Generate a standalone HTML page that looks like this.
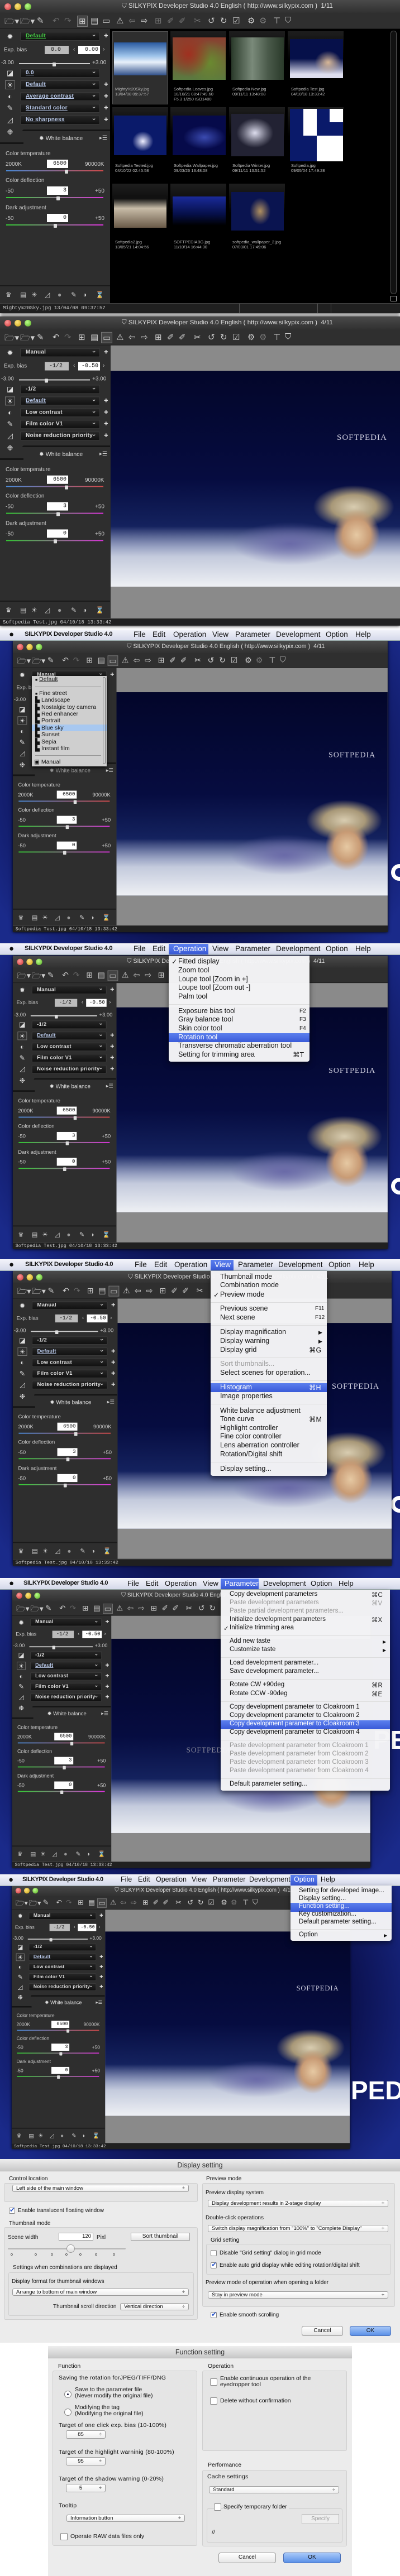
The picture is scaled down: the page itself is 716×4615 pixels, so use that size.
<!DOCTYPE html>
<html><head><meta charset="utf-8">
<style>
*{margin:0;padding:0;box-sizing:border-box}
body{width:716px;height:4615px;position:relative;background:#fff;font-family:"Liberation Sans","DejaVu Sans",sans-serif;overflow:hidden}
.a{position:absolute}
.t{position:absolute;white-space:nowrap}
.desk{position:absolute;left:0;width:716px;background:radial-gradient(ellipse 60% 80% at 50% 45%,#050832 0%,#0a0f4a 60%,#1a2a8a 100%)}
.mb{position:absolute;left:0;width:716px;height:20px;background:linear-gradient(#f2f3fa,#d5d9ea);border-bottom:1px solid #9aa;color:#111;font-size:13.5px}
.mb span{position:absolute;top:1px;white-space:nowrap}
.mb .ap{font-size:15px;top:0}
.mb b{position:absolute;top:2px;white-space:nowrap;font-size:.85em;letter-spacing:-.4px}
.hl{background:linear-gradient(#5b7fee,#3a5ad8);color:#fff;}
.win{position:absolute;width:716px;height:556px;background:#2c2c2c;transform-origin:0 0;overflow:hidden;box-shadow:0 0 6px #000}
.tt{position:absolute;left:0;top:0;width:716px;height:24px;background:linear-gradient(#4a4a4a,#303030)}
.tt i{position:absolute;top:6px;width:12px;height:12px;border-radius:50%}
.tt .r{left:8px;background:radial-gradient(circle at 40% 35%,#f99,#c33)}
.tt .y{left:26px;background:radial-gradient(circle at 40% 35%,#ffe680,#c9a010)}
.tt .g{left:44px;background:radial-gradient(circle at 40% 35%,#bf8,#5a2)}
.ttl{position:absolute;left:218px;top:5px;font-size:11.5px;color:#ddd;white-space:nowrap}
.tool{position:absolute;left:0;top:24px;width:716px;height:28px;background:#2f2f2f;border-bottom:1px solid #1a1a1a;color:#ccc;font-size:15px}
.tool span{position:absolute;top:4px}
.pan{position:absolute;left:0;top:52px;width:197px;height:491px;background:#2e2e2e;color:#ccc;font-size:10px}
.pan .t{font-size:10px;color:#ccc}
.sel{position:absolute;left:36px;width:143px;height:16px;background:linear-gradient(#262626,#111);border:1px solid #3a3a3a;border-radius:2px;color:#ddd;font-size:10px;font-weight:bold;line-height:14px;padding-left:9px;white-space:nowrap;letter-spacing:.3px}
.sel:after{content:"⌄";position:absolute;right:5px;top:-3px;color:#ccc;font-size:11px}
.sel u{color:#b8c8e8}
.pl{position:absolute;left:186px;font-size:9px;color:#ddd}
.ic{position:absolute;left:9px;width:18px;height:16px;color:#ddd;font-size:13px;line-height:16px;text-align:center}
.bx{position:absolute;height:15px;background:#fff;color:#111;font-family:"Liberation Mono",monospace;font-size:10px;text-align:right;padding-right:3px;line-height:15px}
.sl{position:absolute;height:2px}
.th{position:absolute;width:6px;height:7px;background:#ddd;border-radius:1px}
.pv{position:absolute;left:198px;top:52px;width:518px;height:491px;background:#8a8a8a}
.img{position:absolute;left:0;top:46px;width:518px;height:388px;overflow:hidden;
background:
radial-gradient(ellipse 8% 12% at 85% 76%,#e6c9a3 0%,#c89b75 60%,rgba(200,150,110,0) 100%),
radial-gradient(ellipse 14% 10% at 84% 63%,#d8ccb0 0%,#a89878 55%,rgba(150,140,120,0) 100%),
radial-gradient(ellipse 20% 10% at 62% 80%,#6a6aa8 0%,rgba(90,90,160,0) 100%),
linear-gradient(180deg,rgba(0,0,0,0) 72%,rgba(220,225,235,.85) 86%,#eef0f4 100%),
linear-gradient(180deg,#03062a 0%,#060c40 50%,#14225e 72%,#3a4a8a 82%)}
.sp{position:absolute;left:405px;top:112px;font-family:"Liberation Serif",serif;font-size:15px;color:#ccd;letter-spacing:1px}
.st{position:absolute;left:0;top:543px;width:716px;height:13px;background:#202020;border-top:1px solid #444;color:#ccc;font-size:9px;font-family:"Liberation Mono",monospace}
.st span{position:absolute;left:5px;top:1px;white-space:nowrap}
.bi{position:absolute;top:522px;left:0;width:197px;height:21px;border-top:2px solid #1a1a1a;color:#ccc;font-size:12px}
.bi span{position:absolute;top:2px}
.menu{position:absolute;background:rgba(244,244,246,.98);box-shadow:0 4px 10px rgba(0,0,0,.5);border-radius:0 0 4px 4px;color:#111}
.menu div{position:absolute;left:0;right:0;height:16px;white-space:nowrap}
.menu div span{position:absolute;top:0}
.menu .sep{height:1px;background:#ddd}
.menu .h{background:linear-gradient(#5b7fee,#3a5ad8);color:#fff}
.menu .d{color:#999}
.dlg{position:absolute;background:#ececec;color:#111;font-size:10px}
.dtl{position:absolute;left:0;top:0;width:100%;height:22px;background:linear-gradient(#eee,#c8c8c8);border-bottom:1px solid #999;text-align:center;font-size:12.5px;line-height:22px;color:#333}
.gb{position:absolute;border:1px solid #cfcfcf;background:#e5e5e5;border-radius:3px}
.ds{position:absolute;height:13px;background:linear-gradient(#fff,#eee);border:1px solid #9a9a9a;border-radius:3px;font-size:9.5px;line-height:11px;padding-left:6px;white-space:nowrap}
.ds:after{content:"÷";position:absolute;right:6px;top:0;font-size:9px}
.cb{position:absolute;width:11px;height:11px;border:1px solid #888;background:#fff;border-radius:2px}
.cb.k:after{content:"✔";position:absolute;left:0;top:-4px;color:#2a55c8;font-size:12px}
.btn{position:absolute;height:18px;border:1px solid #999;border-radius:4px;background:linear-gradient(#fff,#e6e6e6);text-align:center;font-size:10px;line-height:16px}
.btn.b{background:linear-gradient(#a8c8f8,#5a90e8);border-color:#4a70b8}
.rd{position:absolute;width:13px;height:13px;border:1px solid #888;border-radius:50%;background:#fff}
.cell{position:absolute;width:100px;height:131px;background:linear-gradient(#1e1e1e,#000 40%)}
.cap{position:absolute;font-size:7.5px;color:#bbb;white-space:nowrap;line-height:9px}
</style></head><body>

<!-- ============ SECTION 1 ============ -->
<div class="win" style="left:0;top:0;height:561px;transform:none">
 <div class="tt"><i class="r"></i><i class="y"></i><i class="g"></i><span class="ttl">⛉ SILKYPIX Developer Studio 4.0 English ( http://www.silkypix.com )&nbsp; 1/11</span></div>
 <div class="tool"><span style="left:8px">🗁▾</span><span style="left:36px">🗁▾</span><span style="left:66px">✎</span><span style="left:94px;color:#666">↶</span><span style="left:115px;color:#666">↷</span><span style="left:138px;background:#444;border:1px solid #777;padding:0 2px">⊞</span><span style="left:162px">▤</span><span style="left:183px">▭</span><span style="left:208px">⚠</span><span style="left:230px;color:#777">⇦</span><span style="left:252px">⇨</span><span style="left:277px;color:#777">⊞</span><span style="left:299px;color:#777">✐</span><span style="left:320px;color:#777">✐</span><span style="left:347px;color:#777">✂</span><span style="left:372px">↺</span><span style="left:394px">↻</span><span style="left:416px">☑</span><span style="left:443px">⚙</span><span style="left:464px;color:#777">⚙</span><span style="left:489px">⊤</span><span style="left:510px">⛉</span></div>
 <div class="pan">
  <span class="ic" style="top:6px">✹</span><div class="sel" style="top:5px;color:#4c4"><u style="color:#4c4">Default</u></div><span class="pl" style="top:7px">✚</span>
  <span class="t" style="left:7px;top:32px">Exp. bias</span><div class="bx" style="left:80px;top:30px;width:43px;background:#bbb;text-align:center">0.0</div><span class="t" style="left:131px;top:31px">‹</span><div class="bx" style="left:140px;top:30px;width:39px">0.00</div><span class="t" style="left:184px;top:31px">›</span>
  <span class="t" style="left:2px;top:55px">-3.00</span><div class="sl" style="left:34px;top:61px;width:127px;background:#ccc"></div><div class="th" style="left:94px;top:60px"></div><span class="t" style="left:165px;top:55px">+3.00</span>
  <span class="ic" style="top:71px">◪</span><div class="sel" style="top:71px"><u>0.0</u></div>
  <span class="ic" style="top:92px;border:1px solid #777">☀</span><div class="sel" style="top:92px"><u>Default</u></div><span class="pl" style="top:94px">✚</span>
  <span class="ic" style="top:113px">◐</span><div class="sel" style="top:113px"><u>Average contrast</u></div><span class="pl" style="top:115px">✚</span>
  <span class="ic" style="top:134px">✎</span><div class="sel" style="top:134px"><u>Standard color</u></div><span class="pl" style="top:136px">✚</span>
  <span class="ic" style="top:155px">◿</span><div class="sel" style="top:155px"><u>No sharpness</u></div><span class="pl" style="top:157px">✚</span>
  <span class="ic" style="top:177px">❉</span>
  <div class="a" style="left:40px;top:180px;width:157px;height:3px;background:#151515;border-radius:8px 0 0 0"></div>
  <div class="a" style="left:0;top:203px;width:42px;height:3px;background:#151515"></div>
  <span class="t" style="left:70px;top:190px;font-size:10.5px;color:#ddd">✹ White balance</span><span class="t" style="left:178px;top:190px">▸☰</span>
  <span class="t" style="left:10px;top:218px">Color temperature</span>
  <span class="t" style="left:10px;top:237px">2000K</span><div class="bx" style="left:84px;top:234px;width:38px">6500</div><span class="t" style="left:152px;top:237px">90000K</span>
  <div class="sl" style="left:11px;top:253px;width:174px;background:linear-gradient(90deg,#4a8ad8,#d24a4a)"></div><div class="th" style="left:116px;top:252px"></div>
  <span class="t" style="left:10px;top:266px">Color deflection</span>
  <span class="t" style="left:10px;top:285px">-50</span><div class="bx" style="left:84px;top:282px;width:38px">3</div><span class="t" style="left:170px;top:285px">+50</span>
  <div class="sl" style="left:11px;top:301px;width:174px;background:linear-gradient(90deg,#3c3,#d3d)"></div><div class="th" style="left:101px;top:300px"></div>
  <span class="t" style="left:10px;top:315px">Dark adjustment</span>
  <span class="t" style="left:10px;top:334px">-50</span><div class="bx" style="left:84px;top:331px;width:38px">0</div><span class="t" style="left:170px;top:334px">+50</span>
  <div class="sl" style="left:11px;top:350px;width:174px;background:linear-gradient(90deg,#3c3,#d3d)"></div><div class="th" style="left:96px;top:349px"></div>
  <div class="bi" style="top:459px;height:32px"><span style="left:10px;top:8px">♛</span><span style="left:36px;top:8px">▤</span><span style="left:56px;top:8px">☀</span><span style="left:80px;top:8px">◿</span><span style="left:103px;top:8px;color:#999">●</span><span style="left:127px;top:8px">✎</span><span style="left:148px;top:8px">◑</span><span style="left:171px;top:8px">⌛</span></div>
 </div>
 <div class="a" style="left:197px;top:52px;width:519px;height:491px;background:#000"></div>
 <div class="a" style="left:699px;top:55px;width:11px;height:472px;background:#111;border:1px solid #555;border-radius:5px"></div>
 <div class="a" style="left:699px;top:530px;width:11px;height:10px;border:1px solid #aaa"></div>
 <div class="cell" style="left:201px;top:56px;background:#2e2e2e;border:1px solid #555"></div>
 <div class="cell" style="left:305px;top:56px"></div><div class="cell" style="left:410px;top:56px"></div><div class="cell" style="left:515px;top:56px"></div>
 <div class="cell" style="left:201px;top:192px"></div><div class="cell" style="left:305px;top:192px"></div><div class="cell" style="left:410px;top:192px"></div><div class="cell" style="left:515px;top:192px"></div>
 <div class="cell" style="left:201px;top:329px"></div><div class="cell" style="left:305px;top:329px"></div><div class="cell" style="left:410px;top:329px"></div>
 <div class="a" style="left:204px;top:76px;width:94px;height:59px;background:linear-gradient(#2a5aa0,#9ac0e8 40%,#e8f0fa 60%,#30508a)"></div>
 <div class="a" style="left:309px;top:67px;width:95px;height:76px;background:radial-gradient(circle at 30% 40%,#a03020,transparent 50%),radial-gradient(circle at 70% 60%,#6a8a30,transparent 50%),linear-gradient(#8a4030,#5a7a40)"></div>
 <div class="a" style="left:414px;top:67px;width:94px;height:76px;background:linear-gradient(90deg,#2a3a2a,#7a8a7a 40%,#4a5a4a 70%,#2a3a2a),#354"></div>
 <div class="a" style="left:519px;top:70px;width:95px;height:70px;background:radial-gradient(ellipse 25% 30% at 72% 60%,#d8b898,transparent),linear-gradient(#06104a 50%,#dde 90%)"></div>
 <div class="a" style="left:204px;top:207px;width:94px;height:71px;background:radial-gradient(ellipse 20% 25% at 55% 65%,#eef,transparent),#0a1a6a"></div>
 <div class="a" style="left:309px;top:207px;width:95px;height:71px;background:radial-gradient(ellipse 40% 30% at 60% 55%,#3a4ab0,transparent),#060a4a"></div>
 <div class="a" style="left:414px;top:204px;width:94px;height:76px;background:radial-gradient(ellipse 35% 35% at 45% 45%,#dde,#667 60%,#223)"></div>
 <div class="a" style="left:519px;top:195px;width:95px;height:94px;background:#0a1a6a"></div>
 <div class="a" style="left:543px;top:195px;width:24px;height:48px;background:#fff"></div><div class="a" style="left:590px;top:195px;width:24px;height:24px;background:#fff"></div><div class="a" style="left:567px;top:243px;width:47px;height:46px;background:#fff"></div>
 <div class="a" style="left:204px;top:350px;width:94px;height:58px;background:linear-gradient(#111 10%,#c8bca8 40%,#6a5a48)"></div>
 <div class="a" style="left:309px;top:352px;width:95px;height:52px;background:linear-gradient(#1a2a9a,#06104a 60%,#000)"></div>
 <div class="a" style="left:414px;top:344px;width:94px;height:69px;background:radial-gradient(ellipse 20% 35% at 55% 50%,#b09060,transparent),#0a1450"></div>
 <div class="cap" style="left:206px;top:155px">Mighty%20Sky.jpg<br>13/04/08 09:37:57</div>
 <div class="cap" style="left:311px;top:155px">Softpedia Leaves.jpg<br>10/10/21 08:47:49.60<br>F5.3 1/250 ISO1400</div>
 <div class="cap" style="left:416px;top:155px">Softpedia New.jpg<br>09/11/11 13:48:08</div>
 <div class="cap" style="left:521px;top:155px">Softpedia Test.jpg<br>04/10/18 13:33:42</div>
 <div class="cap" style="left:206px;top:292px">Softpedia Tested.jpg<br>04/10/22 02:45:58</div>
 <div class="cap" style="left:311px;top:292px">Softpedia Wallpaper.jpg<br>09/03/26 13:48:08</div>
 <div class="cap" style="left:416px;top:292px">Softpedia Winter.jpg<br>09/11/11 13:51:52</div>
 <div class="cap" style="left:521px;top:292px">Softpedia.jpg<br>09/05/04 17:49:28</div>
 <div class="cap" style="left:206px;top:429px">Softpedia2.jpg<br>13/05/21 14:04:56</div>
 <div class="cap" style="left:311px;top:429px">SOFTPEDIABG.jpg<br>11/10/14 16:44:30</div>
 <div class="cap" style="left:416px;top:429px">softpedia_wallpaper_2.jpg<br>07/03/01 17:49:06</div>
 <div class="st" style="height:18px"><span style="top:3px">Mighty%20Sky.jpg 13/04/08 09:37:57</span><div class="a" style="left:428px;top:0;width:1px;height:18px;background:#555"></div><div class="a" style="left:568px;top:0;width:1px;height:18px;background:#555"></div><div class="a" style="left:592px;top:0;width:1px;height:18px;background:#555"></div></div>
</div>

<!-- ============ SECTION 2 ============ -->
<div class="win" style="left:0;top:567px;transform:scale(1,.996)">
 <div class="tt"><i class="r"></i><i class="y"></i><i class="g"></i><span class="ttl">⛉ SILKYPIX Developer Studio 4.0 English ( http://www.silkypix.com )&nbsp; 4/11</span></div>
 <div class="tool"><span style="left:8px">🗁▾</span><span style="left:36px">🗁▾</span><span style="left:66px">✎</span><span style="left:94px">↶</span><span style="left:115px;color:#666">↷</span><span style="left:140px">⊞</span><span style="left:162px">▤</span><span style="left:181px;background:#444;border:1px solid #777;padding:0 2px">▭</span><span style="left:208px">⚠</span><span style="left:230px">⇦</span><span style="left:252px">⇨</span><span style="left:277px">⊞</span><span style="left:299px">✐</span><span style="left:320px">✐</span><span style="left:347px">✂</span><span style="left:372px">↺</span><span style="left:394px">↻</span><span style="left:416px">☑</span><span style="left:443px">⚙</span><span style="left:464px;color:#777">⚙</span><span style="left:489px">⊤</span><span style="left:510px">⛉</span></div>
 <div class="pan">
  <span class="ic" style="top:6px">✹</span><div class="sel" style="top:5px">Manual</div><span class="pl" style="top:7px">✚</span>
  <span class="t" style="left:7px;top:32px">Exp. bias</span><div class="bx" style="left:80px;top:30px;width:43px;background:#bbb;text-align:center">-1/2</div><span class="t" style="left:131px;top:31px">‹</span><div class="bx" style="left:140px;top:30px;width:39px">-0.50</div><span class="t" style="left:184px;top:31px">›</span>
  <span class="t" style="left:2px;top:55px">-3.00</span><div class="sl" style="left:34px;top:61px;width:127px;background:#ccc"></div><div class="th" style="left:80px;top:60px"></div><span class="t" style="left:165px;top:55px">+3.00</span>
  <span class="ic" style="top:71px">◪</span><div class="sel" style="top:71px">-1/2</div>
  <span class="ic" style="top:92px;border:1px solid #777">☀</span><div class="sel" style="top:92px"><u>Default</u></div><span class="pl" style="top:94px">✚</span>
  <span class="ic" style="top:113px">◐</span><div class="sel" style="top:113px">Low contrast</div><span class="pl" style="top:115px">✚</span>
  <span class="ic" style="top:134px">✎</span><div class="sel" style="top:134px">Film color V1</div><span class="pl" style="top:136px">✚</span>
  <span class="ic" style="top:155px">◿</span><div class="sel" style="top:155px">Noise reduction priority</div><span class="pl" style="top:157px">✚</span>
  <span class="ic" style="top:177px">❉</span>
  <div class="a" style="left:40px;top:180px;width:157px;height:3px;background:#151515;border-radius:8px 0 0 0"></div><div class="a" style="left:0;top:203px;width:42px;height:3px;background:#151515"></div>
  <span class="t" style="left:70px;top:190px;font-size:10.5px;color:#ddd">✹ White balance</span><span class="t" style="left:178px;top:190px">▸☰</span>
  <span class="t" style="left:10px;top:218px">Color temperature</span>
  <span class="t" style="left:10px;top:237px">2000K</span><div class="bx" style="left:84px;top:234px;width:38px">6500</div><span class="t" style="left:152px;top:237px">90000K</span>
  <div class="sl" style="left:11px;top:253px;width:174px;background:linear-gradient(90deg,#4a8ad8,#d24a4a)"></div><div class="th" style="left:116px;top:252px"></div>
  <span class="t" style="left:10px;top:266px">Color deflection</span>
  <span class="t" style="left:10px;top:285px">-50</span><div class="bx" style="left:84px;top:282px;width:38px">3</div><span class="t" style="left:170px;top:285px">+50</span>
  <div class="sl" style="left:11px;top:301px;width:174px;background:linear-gradient(90deg,#3c3,#d3d)"></div><div class="th" style="left:101px;top:300px"></div>
  <span class="t" style="left:10px;top:315px">Dark adjustment</span>
  <span class="t" style="left:10px;top:334px">-50</span><div class="bx" style="left:84px;top:331px;width:38px">0</div><span class="t" style="left:170px;top:334px">+50</span>
  <div class="sl" style="left:11px;top:350px;width:174px;background:linear-gradient(90deg,#3c3,#d3d)"></div><div class="th" style="left:96px;top:349px"></div>
  <div class="bi" style="top:459px;height:32px"><span style="left:10px;top:8px">♛</span><span style="left:36px;top:8px">▤</span><span style="left:56px;top:8px">☀</span><span style="left:80px;top:8px">◿</span><span style="left:103px;top:8px;color:#999">●</span><span style="left:127px;top:8px">✎</span><span style="left:148px;top:8px">◑</span><span style="left:171px;top:8px">⌛</span></div>
 </div>
 <div class="pv"><div class="img"><span class="sp">SOFTPEDIA</span></div></div>
 <div class="st"><span>Softpedia Test.jpg 04/10/18 13:33:42</span></div>
</div>

<!-- ============ DESKTOPS ============ -->
<div class="desk" style="top:1128px;height:562px"></div>
<div class="desk" style="top:1691px;height:565px"></div>
<div class="desk" style="top:2257px;height:570px"></div>
<div class="desk" style="top:2828px;height:530px"></div>
<div class="desk" style="top:3360px;height:508px"></div>
<div class="t" style="left:668px;top:3090px;font-size:46px;font-weight:bold;color:#fff">PE</div>
<div class="t" style="left:628px;top:3718px;font-size:46px;font-weight:bold;color:#fff">PED</div>
<div class="a" style="left:700px;top:1548px;width:30px;height:30px;border:7px solid #fff;border-radius:50%"></div>
<div class="a" style="left:700px;top:2110px;width:30px;height:30px;border:7px solid #fff;border-radius:50%"></div>
<div class="a" style="left:700px;top:2680px;width:30px;height:30px;border:7px solid #fff;border-radius:50%"></div>

<div class="win" style="left:23px;top:1148px;transform:scale(.937,.939)">
 <div class="tt"><i class="r"></i><i class="y"></i><i class="g"></i><span class="ttl">⛉ SILKYPIX Developer Studio 4.0 English ( http://www.silkypix.com )&nbsp; 4/11</span></div>
 <div class="tool"><span style="left:8px">🗁▾</span><span style="left:36px">🗁▾</span><span style="left:66px">✎</span><span style="left:94px">↶</span><span style="left:115px;color:#666">↷</span><span style="left:140px">⊞</span><span style="left:162px">▤</span><span style="left:181px;background:#444;border:1px solid #777;padding:0 2px">▭</span><span style="left:208px">⚠</span><span style="left:230px">⇦</span><span style="left:252px">⇨</span><span style="left:277px">⊞</span><span style="left:299px">✐</span><span style="left:320px">✐</span><span style="left:347px">✂</span><span style="left:372px">↺</span><span style="left:394px">↻</span><span style="left:416px">☑</span><span style="left:443px">⚙</span><span style="left:464px;color:#777">⚙</span><span style="left:489px">⊤</span><span style="left:510px">⛉</span></div>
 <div class="pan">
  <span class="ic" style="top:6px">✹</span><div class="sel" style="top:5px">Manual</div><span class="pl" style="top:7px">✚</span>
  <span class="t" style="left:7px;top:32px">Exp. bias</span>
  <span class="t" style="left:2px;top:55px">-3.00</span>
  <span class="ic" style="top:71px">◪</span><span class="ic" style="top:92px;border:1px solid #777">☀</span><span class="ic" style="top:113px">◐</span><span class="ic" style="top:134px">✎</span><span class="ic" style="top:155px">◿</span><span class="ic" style="top:177px">❉</span>
  <div class="a" style="left:40px;top:180px;width:157px;height:3px;background:#151515;border-radius:8px 0 0 0"></div><div class="a" style="left:0;top:203px;width:42px;height:3px;background:#151515"></div>
  <span class="t" style="left:70px;top:190px;font-size:10.5px;color:#999">✹ White balance</span><span class="t" style="left:178px;top:190px">▸☰</span>
  <span class="t" style="left:10px;top:218px">Color temperature</span>
  <span class="t" style="left:10px;top:237px">2000K</span><div class="bx" style="left:84px;top:234px;width:38px">6500</div><span class="t" style="left:152px;top:237px">90000K</span>
  <div class="sl" style="left:11px;top:253px;width:174px;background:linear-gradient(90deg,#4a8ad8,#d24a4a)"></div><div class="th" style="left:116px;top:252px"></div>
  <span class="t" style="left:10px;top:266px">Color deflection</span>
  <span class="t" style="left:10px;top:285px">-50</span><div class="bx" style="left:84px;top:282px;width:38px">3</div><span class="t" style="left:170px;top:285px">+50</span>
  <div class="sl" style="left:11px;top:301px;width:174px;background:linear-gradient(90deg,#3c3,#d3d)"></div><div class="th" style="left:101px;top:300px"></div>
  <span class="t" style="left:10px;top:315px">Dark adjustment</span>
  <span class="t" style="left:10px;top:334px">-50</span><div class="bx" style="left:84px;top:331px;width:38px">0</div><span class="t" style="left:170px;top:334px">+50</span>
  <div class="sl" style="left:11px;top:350px;width:174px;background:linear-gradient(90deg,#3c3,#d3d)"></div><div class="th" style="left:96px;top:349px"></div>
  <div class="bi" style="top:459px;height:32px"><span style="left:10px;top:8px">♛</span><span style="left:36px;top:8px">▤</span><span style="left:56px;top:8px">☀</span><span style="left:80px;top:8px">◿</span><span style="left:103px;top:8px;color:#999">●</span><span style="left:127px;top:8px">✎</span><span style="left:148px;top:8px">◑</span><span style="left:171px;top:8px">⌛</span></div>
 </div>
 <div class="pv"><div class="img"><span class="sp">SOFTPEDIA</span></div></div>
 <div class="st"><span>Softpedia Test.jpg 04/10/18 13:33:42</span></div>
</div>
<div class="a" style="left:57px;top:1211px;width:134px;height:162px;background:#cfcfcf;box-shadow:0 2px 6px #000;font-size:10.5px;color:#111">
 <div class="t" style="left:6px;top:0"><span style="font-size:7px">■</span> <u>Default</u></div>
 <div class="a" style="left:6px;top:19px;width:118px;height:1px;background:#999"></div>
 <div class="t" style="left:6px;top:25px"><span style="font-size:7px">■</span> Fine street</div>
 <div class="t" style="left:6px;top:37px">▙ Landscape</div>
 <div class="t" style="left:6px;top:50px">▙ Nostalgic toy camera</div>
 <div class="t" style="left:6px;top:62px">▙ Red enhancer</div>
 <div class="t" style="left:6px;top:74px">▙ Portrait</div>
 <div class="a" style="left:0;top:87px;width:134px;height:12px;background:#a8c8f0"></div>
 <div class="t" style="left:6px;top:87px">▙ Blue sky</div>
 <div class="t" style="left:6px;top:99px">▙ Sunset</div>
 <div class="t" style="left:6px;top:112px">▙ Sepia</div>
 <div class="t" style="left:6px;top:124px">▙ Instant film</div>
 <div class="a" style="left:6px;top:142px;width:118px;height:1px;background:#999"></div>
 <div class="t" style="left:4px;top:148px">▣ Manual</div>
 <div class="a" style="left:127px;top:2px;width:5px;height:156px;border:1px solid #777;border-radius:3px"></div>
</div>

<div class="win" style="left:23px;top:1712px;transform:scale(.937,.946)">
 <div class="tt"><i class="r"></i><i class="y"></i><i class="g"></i><span class="ttl">⛉ SILKYPIX Developer Studio 4.0 English ( http://www.silkypix.com )&nbsp; 4/11</span></div>
 <div class="tool"><span style="left:8px">🗁▾</span><span style="left:36px">🗁▾</span><span style="left:66px">✎</span><span style="left:94px">↶</span><span style="left:115px;color:#666">↷</span><span style="left:140px">⊞</span><span style="left:162px">▤</span><span style="left:181px;background:#444;border:1px solid #777;padding:0 2px">▭</span><span style="left:208px">⚠</span><span style="left:230px">⇦</span><span style="left:252px">⇨</span><span style="left:277px">⊞</span></div>
 <div class="pan">
  <span class="ic" style="top:6px">✹</span><div class="sel" style="top:5px">Manual</div><span class="pl" style="top:7px">✚</span>
  <span class="t" style="left:7px;top:32px">Exp. bias</span><div class="bx" style="left:80px;top:30px;width:43px;background:#bbb;text-align:center">-1/2</div><span class="t" style="left:131px;top:31px">‹</span><div class="bx" style="left:140px;top:30px;width:39px">-0.50</div><span class="t" style="left:184px;top:31px">›</span>
  <span class="t" style="left:2px;top:55px">-3.00</span><div class="sl" style="left:34px;top:61px;width:127px;background:#ccc"></div><div class="th" style="left:80px;top:60px"></div><span class="t" style="left:165px;top:55px">+3.00</span>
  <span class="ic" style="top:71px">◪</span><div class="sel" style="top:71px">-1/2</div>
  <span class="ic" style="top:92px;border:1px solid #777">☀</span><div class="sel" style="top:92px"><u>Default</u></div><span class="pl" style="top:94px">✚</span>
  <span class="ic" style="top:113px">◐</span><div class="sel" style="top:113px">Low contrast</div><span class="pl" style="top:115px">✚</span>
  <span class="ic" style="top:134px">✎</span><div class="sel" style="top:134px">Film color V1</div><span class="pl" style="top:136px">✚</span>
  <span class="ic" style="top:155px">◿</span><div class="sel" style="top:155px">Noise reduction priority</div><span class="pl" style="top:157px">✚</span>
  <span class="ic" style="top:177px">❉</span>
  <div class="a" style="left:40px;top:180px;width:157px;height:3px;background:#151515;border-radius:8px 0 0 0"></div><div class="a" style="left:0;top:203px;width:42px;height:3px;background:#151515"></div>
  <span class="t" style="left:70px;top:190px;font-size:10.5px;color:#ddd">✹ White balance</span><span class="t" style="left:178px;top:190px">▸☰</span>
  <span class="t" style="left:10px;top:218px">Color temperature</span>
  <span class="t" style="left:10px;top:237px">2000K</span><div class="bx" style="left:84px;top:234px;width:38px">6500</div><span class="t" style="left:152px;top:237px">90000K</span>
  <div class="sl" style="left:11px;top:253px;width:174px;background:linear-gradient(90deg,#4a8ad8,#d24a4a)"></div><div class="th" style="left:116px;top:252px"></div>
  <span class="t" style="left:10px;top:266px">Color deflection</span>
  <span class="t" style="left:10px;top:285px">-50</span><div class="bx" style="left:84px;top:282px;width:38px">3</div><span class="t" style="left:170px;top:285px">+50</span>
  <div class="sl" style="left:11px;top:301px;width:174px;background:linear-gradient(90deg,#3c3,#d3d)"></div><div class="th" style="left:101px;top:300px"></div>
  <span class="t" style="left:10px;top:315px">Dark adjustment</span>
  <span class="t" style="left:10px;top:334px">-50</span><div class="bx" style="left:84px;top:331px;width:38px">0</div><span class="t" style="left:170px;top:334px">+50</span>
  <div class="sl" style="left:11px;top:350px;width:174px;background:linear-gradient(90deg,#3c3,#d3d)"></div><div class="th" style="left:96px;top:349px"></div>
  <div class="bi" style="top:459px;height:32px"><span style="left:10px;top:8px">♛</span><span style="left:36px;top:8px">▤</span><span style="left:56px;top:8px">☀</span><span style="left:80px;top:8px">◿</span><span style="left:103px;top:8px;color:#999">●</span><span style="left:127px;top:8px">✎</span><span style="left:148px;top:8px">◑</span><span style="left:171px;top:8px">⌛</span></div>
 </div>
 <div class="pv"><div class="img"><span class="sp">SOFTPEDIA</span></div></div>
 <div class="st"><span>Softpedia Test.jpg 04/10/18 13:33:42</span></div>
</div>

<div class="win" style="left:23px;top:2277px;transform:scale(.947,.95)">
 <div class="tt"><i class="r"></i><i class="y"></i><i class="g"></i><span class="ttl">⛉ SILKYPIX Developer Studio 4.0 English ( http://www.silkypix.com )&nbsp; 4/11</span></div>
 <div class="tool"><span style="left:8px">🗁▾</span><span style="left:36px">🗁▾</span><span style="left:66px">✎</span><span style="left:94px">↶</span><span style="left:115px;color:#666">↷</span><span style="left:140px">⊞</span><span style="left:162px">▤</span><span style="left:181px;background:#444;border:1px solid #777;padding:0 2px">▭</span><span style="left:208px">⚠</span><span style="left:230px">⇦</span><span style="left:252px">⇨</span><span style="left:277px">⊞</span><span style="left:299px">✐</span><span style="left:320px">✐</span><span style="left:347px">✂</span></div>
 <div class="pan">
  <span class="ic" style="top:6px">✹</span><div class="sel" style="top:5px">Manual</div><span class="pl" style="top:7px">✚</span>
  <span class="t" style="left:7px;top:32px">Exp. bias</span><div class="bx" style="left:80px;top:30px;width:43px;background:#bbb;text-align:center">-1/2</div><span class="t" style="left:131px;top:31px">‹</span><div class="bx" style="left:140px;top:30px;width:39px">-0.50</div><span class="t" style="left:184px;top:31px">›</span>
  <span class="t" style="left:2px;top:55px">-3.00</span><div class="sl" style="left:34px;top:61px;width:127px;background:#ccc"></div><div class="th" style="left:80px;top:60px"></div><span class="t" style="left:165px;top:55px">+3.00</span>
  <span class="ic" style="top:71px">◪</span><div class="sel" style="top:71px">-1/2</div>
  <span class="ic" style="top:92px;border:1px solid #777">☀</span><div class="sel" style="top:92px"><u>Default</u></div><span class="pl" style="top:94px">✚</span>
  <span class="ic" style="top:113px">◐</span><div class="sel" style="top:113px">Low contrast</div><span class="pl" style="top:115px">✚</span>
  <span class="ic" style="top:134px">✎</span><div class="sel" style="top:134px">Film color V1</div><span class="pl" style="top:136px">✚</span>
  <span class="ic" style="top:155px">◿</span><div class="sel" style="top:155px">Noise reduction priority</div><span class="pl" style="top:157px">✚</span>
  <span class="ic" style="top:177px">❉</span>
  <div class="a" style="left:40px;top:180px;width:157px;height:3px;background:#151515;border-radius:8px 0 0 0"></div><div class="a" style="left:0;top:203px;width:42px;height:3px;background:#151515"></div>
  <span class="t" style="left:70px;top:190px;font-size:10.5px;color:#ddd">✹ White balance</span><span class="t" style="left:178px;top:190px">▸☰</span>
  <span class="t" style="left:10px;top:218px">Color temperature</span>
  <span class="t" style="left:10px;top:237px">2000K</span><div class="bx" style="left:84px;top:234px;width:38px">6500</div><span class="t" style="left:152px;top:237px">90000K</span>
  <div class="sl" style="left:11px;top:253px;width:174px;background:linear-gradient(90deg,#4a8ad8,#d24a4a)"></div><div class="th" style="left:116px;top:252px"></div>
  <span class="t" style="left:10px;top:266px">Color deflection</span>
  <span class="t" style="left:10px;top:285px">-50</span><div class="bx" style="left:84px;top:282px;width:38px">3</div><span class="t" style="left:170px;top:285px">+50</span>
  <div class="sl" style="left:11px;top:301px;width:174px;background:linear-gradient(90deg,#3c3,#d3d)"></div><div class="th" style="left:101px;top:300px"></div>
  <span class="t" style="left:10px;top:315px">Dark adjustment</span>
  <span class="t" style="left:10px;top:334px">-50</span><div class="bx" style="left:84px;top:331px;width:38px">0</div><span class="t" style="left:170px;top:334px">+50</span>
  <div class="sl" style="left:11px;top:350px;width:174px;background:linear-gradient(90deg,#3c3,#d3d)"></div><div class="th" style="left:96px;top:349px"></div>
  <div class="bi" style="top:459px;height:32px"><span style="left:10px;top:8px">♛</span><span style="left:36px;top:8px">▤</span><span style="left:56px;top:8px">☀</span><span style="left:80px;top:8px">◿</span><span style="left:103px;top:8px;color:#999">●</span><span style="left:127px;top:8px">✎</span><span style="left:148px;top:8px">◑</span><span style="left:171px;top:8px">⌛</span></div>
 </div>
 <div class="pv"><div class="img"><span class="sp">SOFTPEDIA</span></div></div>
 <div class="st"><span>Softpedia Test.jpg 04/10/18 13:33:42</span></div>
</div>

<div class="win" style="left:22px;top:2848px;transform:scale(.895,.897)">
 <div class="tt"><i class="r"></i><i class="y"></i><i class="g"></i><span class="ttl">⛉ SILKYPIX Developer Studio 4.0 English ( http://www.silkypix.com )&nbsp; 4/11</span></div>
 <div class="tool"><span style="left:8px">🗁▾</span><span style="left:36px">🗁▾</span><span style="left:66px">✎</span><span style="left:94px">↶</span><span style="left:115px;color:#666">↷</span><span style="left:140px">⊞</span><span style="left:162px">▤</span><span style="left:181px;background:#444;border:1px solid #777;padding:0 2px">▭</span><span style="left:208px">⚠</span><span style="left:230px">⇦</span><span style="left:252px">⇨</span><span style="left:277px">⊞</span><span style="left:299px">✐</span><span style="left:320px">✐</span><span style="left:347px">✂</span><span style="left:372px">↺</span><span style="left:394px">↻</span></div>
 <div class="pan">
  <span class="ic" style="top:6px">✹</span><div class="sel" style="top:5px">Manual</div><span class="pl" style="top:7px">✚</span>
  <span class="t" style="left:7px;top:32px">Exp. bias</span><div class="bx" style="left:80px;top:30px;width:43px;background:#bbb;text-align:center">-1/2</div><span class="t" style="left:131px;top:31px">‹</span><div class="bx" style="left:140px;top:30px;width:39px">-0.50</div><span class="t" style="left:184px;top:31px">›</span>
  <span class="t" style="left:2px;top:55px">-3.00</span><div class="sl" style="left:34px;top:61px;width:127px;background:#ccc"></div><div class="th" style="left:80px;top:60px"></div><span class="t" style="left:165px;top:55px">+3.00</span>
  <span class="ic" style="top:71px">◪</span><div class="sel" style="top:71px">-1/2</div>
  <span class="ic" style="top:92px;border:1px solid #777">☀</span><div class="sel" style="top:92px"><u>Default</u></div><span class="pl" style="top:94px">✚</span>
  <span class="ic" style="top:113px">◐</span><div class="sel" style="top:113px">Low contrast</div><span class="pl" style="top:115px">✚</span>
  <span class="ic" style="top:134px">✎</span><div class="sel" style="top:134px">Film color V1</div><span class="pl" style="top:136px">✚</span>
  <span class="ic" style="top:155px">◿</span><div class="sel" style="top:155px">Noise reduction priority</div><span class="pl" style="top:157px">✚</span>
  <span class="ic" style="top:177px">❉</span>
  <div class="a" style="left:40px;top:180px;width:157px;height:3px;background:#151515;border-radius:8px 0 0 0"></div><div class="a" style="left:0;top:203px;width:42px;height:3px;background:#151515"></div>
  <span class="t" style="left:70px;top:190px;font-size:10.5px;color:#ddd">✹ White balance</span><span class="t" style="left:178px;top:190px">▸☰</span>
  <span class="t" style="left:10px;top:218px">Color temperature</span>
  <span class="t" style="left:10px;top:237px">2000K</span><div class="bx" style="left:84px;top:234px;width:38px">6500</div><span class="t" style="left:152px;top:237px">90000K</span>
  <div class="sl" style="left:11px;top:253px;width:174px;background:linear-gradient(90deg,#4a8ad8,#d24a4a)"></div><div class="th" style="left:116px;top:252px"></div>
  <span class="t" style="left:10px;top:266px">Color deflection</span>
  <span class="t" style="left:10px;top:285px">-50</span><div class="bx" style="left:84px;top:282px;width:38px">3</div><span class="t" style="left:170px;top:285px">+50</span>
  <div class="sl" style="left:11px;top:301px;width:174px;background:linear-gradient(90deg,#3c3,#d3d)"></div><div class="th" style="left:101px;top:300px"></div>
  <span class="t" style="left:10px;top:315px">Dark adjustment</span>
  <span class="t" style="left:10px;top:334px">-50</span><div class="bx" style="left:84px;top:331px;width:38px">0</div><span class="t" style="left:170px;top:334px">+50</span>
  <div class="sl" style="left:11px;top:350px;width:174px;background:linear-gradient(90deg,#3c3,#d3d)"></div><div class="th" style="left:96px;top:349px"></div>
  <div class="bi" style="top:459px;height:32px"><span style="left:10px;top:8px">♛</span><span style="left:36px;top:8px">▤</span><span style="left:56px;top:8px">☀</span><span style="left:80px;top:8px">◿</span><span style="left:103px;top:8px;color:#999">●</span><span style="left:127px;top:8px">✎</span><span style="left:148px;top:8px">◑</span><span style="left:171px;top:8px">⌛</span></div>
 </div>
 <div class="pv"><div class="img"><span class="sp" style="left:150px;top:215px;color:#889">SOFTPEDIA</span></div></div>
 <div class="st"><span>Softpedia Test.jpg 04/10/18 13:33:42</span></div>
</div>

<div class="win" style="left:21px;top:3377px;transform:scale(.845,.851)">
 <div class="tt"><i class="r"></i><i class="y"></i><i class="g"></i><span class="ttl">⛉ SILKYPIX Developer Studio 4.0 English ( http://www.silkypix.com )&nbsp; 4/11</span></div>
 <div class="tool"><span style="left:8px">🗁▾</span><span style="left:36px">🗁▾</span><span style="left:66px">✎</span><span style="left:94px">↶</span><span style="left:115px;color:#666">↷</span><span style="left:140px">⊞</span><span style="left:162px">▤</span><span style="left:181px;background:#444;border:1px solid #777;padding:0 2px">▭</span><span style="left:208px">⚠</span><span style="left:230px">⇦</span><span style="left:252px">⇨</span><span style="left:277px">⊞</span><span style="left:299px">✐</span><span style="left:320px">✐</span><span style="left:347px">✂</span><span style="left:372px">↺</span><span style="left:394px">↻</span><span style="left:416px">☑</span><span style="left:443px">⚙</span><span style="left:464px;color:#777">⚙</span><span style="left:489px">⊤</span><span style="left:510px">⛉</span></div>
 <div class="pan">
  <span class="ic" style="top:6px">✹</span><div class="sel" style="top:5px">Manual</div><span class="pl" style="top:7px">✚</span>
  <span class="t" style="left:7px;top:32px">Exp. bias</span><div class="bx" style="left:80px;top:30px;width:43px;background:#bbb;text-align:center">-1/2</div><span class="t" style="left:131px;top:31px">‹</span><div class="bx" style="left:140px;top:30px;width:39px">-0.50</div><span class="t" style="left:184px;top:31px">›</span>
  <span class="t" style="left:2px;top:55px">-3.00</span><div class="sl" style="left:34px;top:61px;width:127px;background:#ccc"></div><div class="th" style="left:80px;top:60px"></div><span class="t" style="left:165px;top:55px">+3.00</span>
  <span class="ic" style="top:71px">◪</span><div class="sel" style="top:71px">-1/2</div>
  <span class="ic" style="top:92px;border:1px solid #777">☀</span><div class="sel" style="top:92px"><u>Default</u></div><span class="pl" style="top:94px">✚</span>
  <span class="ic" style="top:113px">◐</span><div class="sel" style="top:113px">Low contrast</div><span class="pl" style="top:115px">✚</span>
  <span class="ic" style="top:134px">✎</span><div class="sel" style="top:134px">Film color V1</div><span class="pl" style="top:136px">✚</span>
  <span class="ic" style="top:155px">◿</span><div class="sel" style="top:155px">Noise reduction priority</div><span class="pl" style="top:157px">✚</span>
  <span class="ic" style="top:177px">❉</span>
  <div class="a" style="left:40px;top:180px;width:157px;height:3px;background:#151515;border-radius:8px 0 0 0"></div><div class="a" style="left:0;top:203px;width:42px;height:3px;background:#151515"></div>
  <span class="t" style="left:70px;top:190px;font-size:10.5px;color:#ddd">✹ White balance</span><span class="t" style="left:178px;top:190px">▸☰</span>
  <span class="t" style="left:10px;top:218px">Color temperature</span>
  <span class="t" style="left:10px;top:237px">2000K</span><div class="bx" style="left:84px;top:234px;width:38px">6500</div><span class="t" style="left:152px;top:237px">90000K</span>
  <div class="sl" style="left:11px;top:253px;width:174px;background:linear-gradient(90deg,#4a8ad8,#d24a4a)"></div><div class="th" style="left:116px;top:252px"></div>
  <span class="t" style="left:10px;top:266px">Color deflection</span>
  <span class="t" style="left:10px;top:285px">-50</span><div class="bx" style="left:84px;top:282px;width:38px">3</div><span class="t" style="left:170px;top:285px">+50</span>
  <div class="sl" style="left:11px;top:301px;width:174px;background:linear-gradient(90deg,#3c3,#d3d)"></div><div class="th" style="left:101px;top:300px"></div>
  <span class="t" style="left:10px;top:315px">Dark adjustment</span>
  <span class="t" style="left:10px;top:334px">-50</span><div class="bx" style="left:84px;top:331px;width:38px">0</div><span class="t" style="left:170px;top:334px">+50</span>
  <div class="sl" style="left:11px;top:350px;width:174px;background:linear-gradient(90deg,#3c3,#d3d)"></div><div class="th" style="left:96px;top:349px"></div>
  <div class="bi" style="top:459px;height:32px"><span style="left:10px;top:8px">♛</span><span style="left:36px;top:8px">▤</span><span style="left:56px;top:8px">☀</span><span style="left:80px;top:8px">◿</span><span style="left:103px;top:8px;color:#999">●</span><span style="left:127px;top:8px">✎</span><span style="left:148px;top:8px">◑</span><span style="left:171px;top:8px">⌛</span></div>
 </div>
 <div class="pv"><div class="img"><span class="sp">SOFTPEDIA</span></div></div>
 <div class="st"><span>Softpedia Test.jpg 04/10/18 13:33:42</span></div>
</div>

<!-- ============ MENUBARS ============ -->
<div class="mb" style="top:1128px"><span class="ap" style="left:16px">●</span><b style="left:44px">SILKYPIX Developer Studio 4.0</b><span style="left:239px">File</span><span style="left:273px">Edit</span><span style="left:310px">Operation</span><span style="left:380px">View</span><span style="left:421px">Parameter</span><span style="left:494px">Development</span><span style="left:583px">Option</span><span style="left:636px">Help</span></div>
<div class="mb" style="top:1691px"><span class="ap" style="left:16px">●</span><b style="left:44px">SILKYPIX Developer Studio 4.0</b><span style="left:239px">File</span><span style="left:273px">Edit</span><span class="hl" style="left:302px;top:0;height:19px;width:71px;padding:1px 0 0 8px">Operation</span><span style="left:380px">View</span><span style="left:421px">Parameter</span><span style="left:494px">Development</span><span style="left:583px">Option</span><span style="left:636px">Help</span></div>
<div class="mb" style="top:2257px"><span class="ap" style="left:16px">●</span><b style="left:45px">SILKYPIX Developer Studio 4.0</b><span style="left:241px">File</span><span style="left:276px">Edit</span><span style="left:312px">Operation</span><span class="hl" style="left:377px;top:0;height:19px;width:41px;padding:1px 0 0 7px">View</span><span style="left:426px">Parameter</span><span style="left:498px">Development</span><span style="left:588px">Option</span><span style="left:642px">Help</span></div>
<div class="mb" style="top:2828px;font-size:13px"><span class="ap" style="left:16px">●</span><b style="left:42px">SILKYPIX Developer Studio 4.0</b><span style="left:228px">File</span><span style="left:261px">Edit</span><span style="left:295px">Operation</span><span style="left:363px">View</span><span class="hl" style="left:395px;top:0;height:19px;width:68px;padding:1px 0 0 7px">Parameter</span><span style="left:471px">Development</span><span style="left:556px">Option</span><span style="left:606px">Help</span></div>
<div class="mb" style="top:3359px;font-size:12.5px"><span class="ap" style="left:15px">●</span><b style="left:40px">SILKYPIX Developer Studio 4.0</b><span style="left:216px">File</span><span style="left:247px">Edit</span><span style="left:279px">Operation</span><span style="left:343px">View</span><span style="left:381px">Parameter</span><span style="left:446px">Development</span><span class="hl" style="left:520px;top:0;height:19px;width:48px;padding:1px 0 0 6px">Option</span><span style="left:574px">Help</span></div>

<!-- ============ MENUS ============ -->
<div class="menu" style="left:302px;top:1712px;width:252px;height:190px;font-size:12.5px">
 <div style="top:3px"><span style="left:5px">✓</span><span style="left:17px">Fitted display</span></div>
 <div style="top:19px"><span style="left:17px">Zoom tool</span></div>
 <div style="top:35px"><span style="left:17px">Loupe tool [Zoom in +]</span></div>
 <div style="top:50px"><span style="left:17px">Loupe tool [Zoom out -]</span></div>
 <div style="top:66px"><span style="left:17px">Palm tool</span></div>
 <div class="sep" style="top:87px"></div>
 <div style="top:92px"><span style="left:17px">Exposure bias tool</span><span style="left:234px;font-size:10px;top:2px">F2</span></div>
 <div style="top:107px"><span style="left:17px">Gray balance tool</span><span style="left:234px;font-size:10px;top:2px">F3</span></div>
 <div style="top:123px"><span style="left:17px">Skin color tool</span><span style="left:234px;font-size:10px;top:2px">F4</span></div>
 <div class="h" style="top:139px"><span style="left:17px">Rotation tool</span></div>
 <div style="top:154px"><span style="left:17px">Transverse chromatic aberration tool</span></div>
 <div style="top:170px"><span style="left:17px">Setting for trimming area</span><span style="left:222px">⌘T</span></div>
</div>

<div class="menu" style="left:377px;top:2277px;width:208px;height:367px;font-size:12.5px">
 <div style="top:3px"><span style="left:17px">Thumbnail mode</span></div>
 <div style="top:18px"><span style="left:17px">Combination mode</span></div>
 <div style="top:35px"><span style="left:5px">✓</span><span style="left:17px">Preview mode</span></div>
 <div class="sep" style="top:56px"></div>
 <div style="top:60px"><span style="left:17px">Previous scene</span><span style="left:187px;font-size:10px;top:2px">F11</span></div>
 <div style="top:76px"><span style="left:17px">Next scene</span><span style="left:187px;font-size:10px;top:2px">F12</span></div>
 <div class="sep" style="top:97px"></div>
 <div style="top:102px"><span style="left:17px">Display magnification</span><span style="left:193px;font-size:9px;top:3px">▶</span></div>
 <div style="top:118px"><span style="left:17px">Display warning</span><span style="left:193px;font-size:9px;top:3px">▶</span></div>
 <div style="top:134px"><span style="left:17px">Display grid</span><span style="left:176px">⌘G</span></div>
 <div class="sep" style="top:155px"></div>
 <div class="d" style="top:159px"><span style="left:17px">Sort thumbnails...</span></div>
 <div style="top:175px"><span style="left:17px">Select scenes for operation...</span></div>
 <div class="sep" style="top:196px"></div>
 <div class="h" style="top:201px"><span style="left:17px">Histogram</span><span style="left:176px">⌘H</span></div>
 <div style="top:217px"><span style="left:17px">Image properties</span></div>
 <div class="sep" style="top:238px"></div>
 <div style="top:243px"><span style="left:17px">White balance adjustment</span></div>
 <div style="top:258px"><span style="left:17px">Tone curve</span><span style="left:176px">⌘M</span></div>
 <div style="top:274px"><span style="left:17px">Highlight controller</span></div>
 <div style="top:289px"><span style="left:17px">Fine color controller</span></div>
 <div style="top:305px"><span style="left:17px">Lens aberration controller</span></div>
 <div style="top:321px"><span style="left:17px">Rotation/Digital shift</span></div>
 <div class="sep" style="top:342px"></div>
 <div style="top:347px"><span style="left:17px">Display setting...</span></div>
</div>

<div class="menu" style="left:395px;top:2848px;width:303px;height:360px;font-size:11.5px">
 <div style="top:2px"><span style="left:16px">Copy development parameters</span><span style="left:270px">⌘C</span></div>
 <div class="d" style="top:17px"><span style="left:16px">Paste development parameters</span><span style="left:270px">⌘V</span></div>
 <div class="d" style="top:32px"><span style="left:16px">Paste partial development parameters...</span></div>
 <div style="top:47px"><span style="left:16px">Initialize development parameters</span><span style="left:270px">⌘X</span></div>
 <div style="top:62px"><span style="left:5px">✓</span><span style="left:16px">Initialize trimming area</span></div>
 <div class="sep" style="top:82px"></div>
 <div style="top:86px"><span style="left:16px">Add new taste</span><span style="left:290px;font-size:8px;top:3px">▶</span></div>
 <div style="top:101px"><span style="left:16px">Customize taste</span><span style="left:290px;font-size:8px;top:3px">▶</span></div>
 <div class="sep" style="top:121px"></div>
 <div style="top:125px"><span style="left:16px">Load development parameter...</span></div>
 <div style="top:140px"><span style="left:16px">Save development parameter...</span></div>
 <div class="sep" style="top:160px"></div>
 <div style="top:164px"><span style="left:16px">Rotate CW +90deg</span><span style="left:270px">⌘R</span></div>
 <div style="top:180px"><span style="left:16px">Rotate CCW -90deg</span><span style="left:270px">⌘E</span></div>
 <div class="sep" style="top:200px"></div>
 <div style="top:204px"><span style="left:16px">Copy development parameter to Cloakroom 1</span></div>
 <div style="top:219px"><span style="left:16px">Copy development parameter to Cloakroom 2</span></div>
 <div class="h" style="top:234px"><span style="left:16px">Copy development parameter to Cloakroom 3</span></div>
 <div style="top:249px"><span style="left:16px">Copy development parameter to Cloakroom 4</span></div>
 <div class="sep" style="top:269px"></div>
 <div class="d" style="top:273px"><span style="left:16px">Paste development parameter from Cloakroom 1</span></div>
 <div class="d" style="top:288px"><span style="left:16px">Paste development parameter from Cloakroom 2</span></div>
 <div class="d" style="top:303px"><span style="left:16px">Paste development parameter from Cloakroom 3</span></div>
 <div class="d" style="top:318px"><span style="left:16px">Paste development parameter from Cloakroom 4</span></div>
 <div class="sep" style="top:338px"></div>
 <div style="top:342px"><span style="left:16px">Default parameter setting...</span></div>
</div>

<div class="menu" style="left:520px;top:3378px;width:181px;height:99px;font-size:11.5px">
 <div style="top:3px"><span style="left:15px">Setting for developed image...</span></div>
 <div style="top:17px"><span style="left:15px">Display setting...</span></div>
 <div class="h" style="top:31px"><span style="left:15px">Function setting...</span></div>
 <div style="top:45px"><span style="left:15px">Key customization...</span></div>
 <div style="top:59px"><span style="left:15px">Default parameter setting...</span></div>
 <div class="sep" style="top:78px"></div>
 <div style="top:82px"><span style="left:15px">Option</span><span style="left:167px;font-size:8px;top:3px">▶</span></div>
</div>

<!-- ============ DISPLAY SETTING ============ -->
<div class="dlg" style="left:0;top:3868px;width:716px;height:329px">
 <div class="dtl">Display setting</div>
 <span class="t" style="left:16px;top:30px">Control location</span>
 <div class="gb" style="left:7px;top:43px;width:347px;height:34px"></div>
 <div class="ds" style="left:22px;top:46px;width:316px">Left side of the main window</div>
 <div class="cb k" style="left:16px;top:87px"></div><span class="t" style="left:32px;top:87px">Enable translucent floating window</span>
 <span class="t" style="left:16px;top:110px">Thumbnail mode</span>
 <div class="gb" style="left:7px;top:122px;width:347px;height:166px"></div>
 <span class="t" style="left:14px;top:135px">Scene width</span>
 <div class="a" style="left:105px;top:132px;width:62px;height:14px;background:#fff;border:1px solid #999;text-align:right;padding-right:3px;font-size:9.5px">120</div>
 <span class="t" style="left:173px;top:135px">Pixl</span>
 <div class="btn" style="left:234px;top:132px;width:106px;height:14px;line-height:12px;border-radius:0">Sort thumbnail</div>
 <div class="a" style="left:14px;top:159px;width:211px;height:3px;background:#bbb;border-radius:2px"></div>
 <div class="a" style="left:119px;top:153px;width:15px;height:15px;border-radius:50%;background:linear-gradient(#fff,#ddd);border:1px solid #999"></div>
 <span class="t" style="left:19px;top:168px;font-size:7px">o</span><span class="t" style="left:62px;top:168px;font-size:7px">o</span><span class="t" style="left:91px;top:168px;font-size:7px">o</span><span class="t" style="left:117px;top:168px;font-size:7px">o</span><span class="t" style="left:142px;top:168px;font-size:7px">o</span><span class="t" style="left:170px;top:168px;font-size:7px">o</span><span class="t" style="left:202px;top:168px;font-size:7px">o</span>
 <span class="t" style="left:23px;top:189px">Settings when combinations are displayed</span>
 <div class="gb" style="left:15px;top:203px;width:332px;height:78px"></div>
 <span class="t" style="left:21px;top:214px">Display format for thumbnail windows</span>
 <div class="ds" style="left:22px;top:232px;width:316px">Arrange to bottom of main window</div>
 <span class="t" style="left:95px;top:259px">Thumbnail scroll direction</span>
 <div class="ds" style="left:215px;top:258px;width:123px">Vertical direction</div>
 <span class="t" style="left:369px;top:30px">Preview mode</span>
 <div class="gb" style="left:362px;top:43px;width:345px;height:222px"></div>
 <span class="t" style="left:368px;top:55px">Preview display system</span>
 <div class="ds" style="left:372px;top:73px;width:323px">Display development results in 2-stage display</div>
 <span class="t" style="left:368px;top:100px">Double-click operations</span>
 <div class="ds" style="left:372px;top:118px;width:323px">Switch display magnification from "100%" to "Complete Display"</div>
 <span class="t" style="left:377px;top:140px">Grid setting</span>
 <div class="gb" style="left:369px;top:152px;width:331px;height:55px"></div>
 <div class="cb" style="left:377px;top:163px"></div><span class="t" style="left:393px;top:163px">Disable "Grid setting" dialog in grid mode</span>
 <div class="cb k" style="left:377px;top:185px"></div><span class="t" style="left:393px;top:185px">Enable auto grid display while editing rotation/digital shift</span>
 <span class="t" style="left:368px;top:216px">Preview mode of operation when opening a folder</span>
 <div class="ds" style="left:372px;top:237px;width:323px">Stay in preview mode</div>
 <div class="cb k" style="left:377px;top:274px"></div><span class="t" style="left:393px;top:274px">Enable smooth scrolling</span>
 <div class="btn" style="left:540px;top:299px;width:74px">Cancel</div>
 <div class="btn b" style="left:626px;top:299px;width:74px">OK</div>
</div>

<!-- ============ FUNCTION SETTING ============ -->
<div class="dlg" style="left:86px;top:4203px;width:544px;height:412px;font-size:10.5px">
 <div class="dtl">Function setting</div>
 <span class="t" style="left:18px;top:30px">Function</span>
 <div class="gb" style="left:8px;top:44px;width:259px;height:314px"></div>
 <span class="t" style="left:19px;top:51px;letter-spacing:.3px">Saving the rotation forJPEG/TIFF/DNG</span>
 <div class="rd" style="left:29px;top:80px"><div class="a" style="left:4px;top:4px;width:3px;height:3px;background:#113;border-radius:50%"></div></div>
 <span class="t" style="left:48px;top:73px;line-height:11px">Save to the parameter file<br>(Never modify the original file)</span>
 <div class="rd" style="left:29px;top:112px"></div>
 <span class="t" style="left:48px;top:105px;line-height:11px">Modifying the tag<br>(Modifying the original file)</span>
 <span class="t" style="left:19px;top:136px;letter-spacing:.3px">Target of one click exp. bias (10-100%)</span>
 <div class="ds" style="left:32px;top:151px;width:71px;height:15px;text-align:center;padding:0 18px 0 0;line-height:13px">85</div>
 <span class="t" style="left:19px;top:184px;letter-spacing:.3px">Target of the highlight warninig (80-100%)</span>
 <div class="ds" style="left:32px;top:199px;width:71px;height:15px;text-align:center;padding:0 18px 0 0;line-height:13px">95</div>
 <span class="t" style="left:19px;top:232px;letter-spacing:.3px">Target of the shadow warning (0-20%)</span>
 <div class="ds" style="left:32px;top:247px;width:71px;height:15px;text-align:center;padding:0 18px 0 0;line-height:13px">5</div>
 <span class="t" style="left:19px;top:280px;letter-spacing:.3px">Tooltip</span>
 <div class="ds" style="left:33px;top:302px;width:212px;height:13px">Information button</div>
 <div class="cb" style="left:22px;top:335px;width:13px;height:13px"></div><span class="t" style="left:40px;top:335px">Operate RAW data files only</span>
 <span class="t" style="left:286px;top:30px">Operation</span>
 <div class="gb" style="left:276px;top:44px;width:259px;height:144px"></div>
 <div class="cb" style="left:290px;top:58px;width:13px;height:13px"></div><span class="t" style="left:308px;top:53px;line-height:11px">Enable continuous operation of the<br>eyedropper tool</span>
 <div class="cb" style="left:290px;top:92px;width:13px;height:13px"></div><span class="t" style="left:308px;top:92px">Delete without confirmation</span>
 <span class="t" style="left:286px;top:207px">Performance</span>
 <div class="gb" style="left:276px;top:222px;width:259px;height:137px"></div>
 <span class="t" style="left:285px;top:228px;letter-spacing:.3px">Cache settings</span>
 <div class="ds" style="left:288px;top:251px;width:233px">Standard</div>
 <div class="a" style="left:284px;top:291px;width:243px;height:61px;border:1px solid #ccc;border-radius:3px"></div>
 <div class="cb" style="left:297px;top:282px;width:13px;height:13px"></div><span class="t" style="left:314px;top:282px;background:#e5e5e5;padding-right:3px">Specify temporary folder</span>
 <div class="btn" style="left:454px;top:301px;width:67px;color:#999;border-radius:0;border-color:#bbb;background:#eee">Specify</div>
 <span class="t" style="left:293px;top:328px">//</span>
 <div class="btn" style="left:305px;top:370px;width:103px;height:19px">Cancel</div>
 <div class="btn b" style="left:421px;top:370px;width:103px;height:19px">OK</div>
</div>
</body></html>
